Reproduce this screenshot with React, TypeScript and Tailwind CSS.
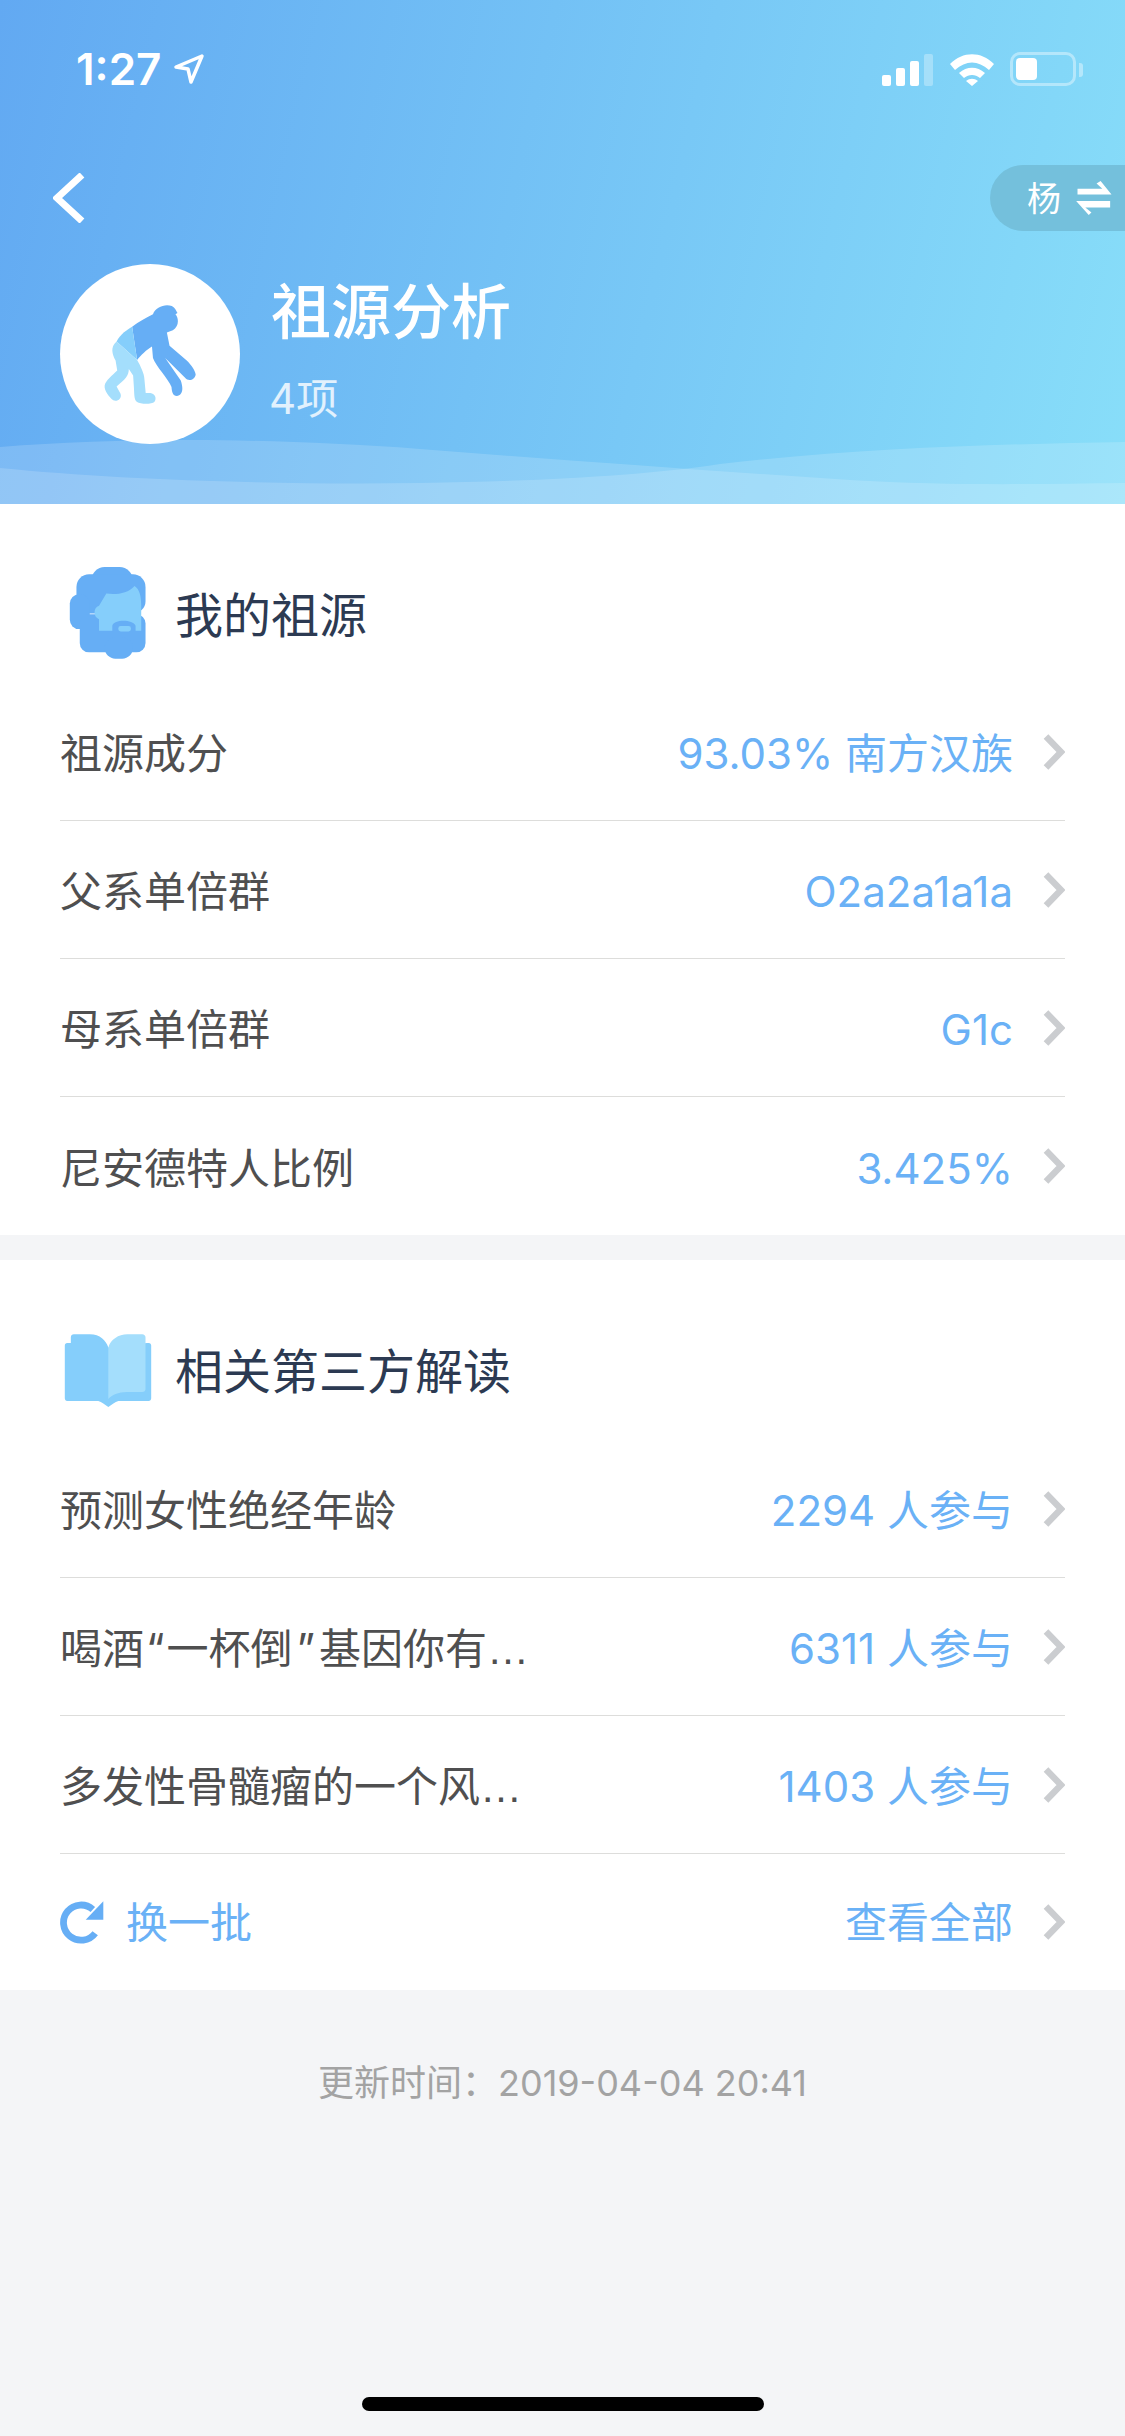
import type { ReactNode } from "react";

const CJK = "font-['Inter','Noto_Sans_CJK_SC',sans-serif]";

type RowProps = {
  label: ReactNode;
  value: string;
  last?: boolean;
};

function Chevron() {
  return (
    <svg width="22" height="36" viewBox="0 0 22 36" className="ml-[30px] shrink-0">
      <path d="M3 2.5 L18 18 L3 33.5" fill="none" stroke="#cbcdd0" strokeWidth="6.5" />
    </svg>
  );
}

function Ellipsis() {
  return <span className="font-['Liberation_Sans',sans-serif]">…</span>;
}

function Row({ label, value, last }: RowProps) {
  return (
    <div className={`mx-[60px] flex h-[138px] items-center justify-between ${last ? "" : "border-b border-[#dddddb]"}`}>
      <span className="pt-[4px] text-[42px] text-[#4f4f50]">{label}</span>
      <div className="flex items-center">
        <span className="pt-[4px] text-[42px] text-[#6ab1f6]">{value}</span>
        <Chevron />
      </div>
    </div>
  );
}

function MonkeyIcon() {
  return (
    <svg width="92" height="101" viewBox="190 160 278 303">
      <path fill="#66aef5" d="M275 228 C295 212 320 200 338 190 C345 168 375 157 395 165 C405 170 408 180 412 186 L406 190 C418 205 415 228 398 238 L380 245 L388 285 L440 330 C455 345 465 360 467 372 C465 388 445 395 435 382 L375 322 L422 390 C432 420 425 435 410 437 C398 437 395 425 394 410 C385 385 345 345 338 322 L335 287 C320 295 300 315 290 328 Z" />
      <path fill="#85cefb" d="M275 228 L290 328 L228 272 C240 250 258 238 275 228 Z" />
      <path fill="#a4defc" d="M228 272 L290 328 C300 345 312 370 312 385 L316 428 L330 428 C345 430 350 445 342 455 C335 462 300 462 290 455 C280 448 282 430 280 405 L278 375 L265 355 C265 375 255 385 228 408 L240 430 C245 445 230 455 218 450 C205 440 190 420 192 405 C195 390 215 375 230 360 L225 330 C215 310 208 290 228 272 Z" />
    </svg>
  );
}

function FaceIcon() {
  return (
    <svg width="78" height="93" viewBox="88 45 234 280" className="mb-[6px]">
      <g fill="#66aef5">
        <rect x="155" y="48" width="125" height="80" rx="40" />
        <rect x="110" y="70" width="208" height="118" rx="38" />
        <rect x="90" y="130" width="60" height="105" rx="28" />
        <rect x="120" y="190" width="198" height="115" rx="28" />
        <rect x="195" y="260" width="85" height="64" rx="32" />
      </g>
      <path fill="#85cefb" d="M200 128 C230 132 265 128 285 105 C300 115 305 135 305 165 L305 240 L178 240 L178 205 C160 200 160 170 178 165 Z" />
      <path fill="#66aef5" d="M218 242 L218 225 C222 205 280 205 288 225 L288 242 Z" />
      <rect x="236" y="226" width="38" height="16" rx="7" fill="#85cefb" />
    </svg>
  );
}

function BookIcon() {
  return (
    <svg width="88" height="73" viewBox="74 68 260 218" className="mb-[4px]">
      <path fill="#85cefb" d="M82 95 L93 95 L93 78 C93 72 97 69 102 69 L150 69 C180 69 198 88 205 108 L320 95 L326 95 C330 95 333 98 333 102 L333 260 C333 265 330 268 325 268 L235 268 C225 270 215 280 205 286 C195 280 185 270 175 268 L82 268 C78 268 75 265 75 260 L75 102 C75 98 78 95 82 95 Z" />
      <path fill="#a4defc" d="M205 108 C212 85 235 69 262 69 L306 69 C312 69 316 73 316 78 L316 232 C316 238 312 241 306 241 L260 241 C235 241 215 250 205 262 Z" />
    </svg>
  );
}

function RefreshIcon() {
  return (
    <svg width="44" height="44" viewBox="58 62 130 130">
      <path d="M155 90 A52 52 0 1 0 162 160" fill="none" stroke="#66aef5" strokeWidth="20" />
      <path d="M186 66 L186 120 L134 120 Z" fill="#66aef5" />
    </svg>
  );
}

function StatusBar() {
  return (
    <div className="flex h-[90px] items-start justify-between pl-[76px] pr-[42px] pt-[46px]">
      <div className="flex items-center">
        <span className="text-[44px] font-semibold leading-[46px] text-white">1:27</span>
        <svg width="32" height="32" viewBox="0 0 32 32" className="ml-[12px]">
          <path d="M29 3 L3 14 L15 16 L18 29 Z" fill="none" stroke="#fff" strokeWidth="3.5" strokeLinejoin="round" />
        </svg>
      </div>
      <div className="mt-[6px] flex items-end">
        <div className="flex items-end gap-[5px]">
          <div className="h-[11px] w-[9px] rounded-[2px] bg-white" />
          <div className="h-[18px] w-[9px] rounded-[2px] bg-white" />
          <div className="h-[25px] w-[9px] rounded-[2px] bg-white" />
          <div className="h-[32px] w-[9px] rounded-[2px] bg-white/30" />
        </div>
        <svg width="46" height="33" viewBox="0 0 46 33" className="ml-[16px]">
          <path d="M1 11 C14 -2 32 -2 45 11 L40 17 C29 7 17 7 6 17 Z M10 20 C18 13 28 13 36 20 L31 25 C26 21 20 21 15 25 Z M17 28 C21 25 25 25 29 28 L23 33 Z" fill="#fff" />
        </svg>
        <div className="ml-[15px] flex h-[34px] w-[66px] items-center rounded-[10px] border-[3px] border-white/40 p-[3px]">
          <div className="h-full w-[21px] rounded-[4px] bg-white" />
        </div>
        <div className="mb-[9px] ml-[3px] h-[14px] w-[4px] rounded-r-[3px] bg-white/40" />
      </div>
    </div>
  );
}

function Header() {
  return (
    <div className="relative h-[504px] shrink-0 overflow-hidden bg-[linear-gradient(103deg,#62a9f2_0%,#78c8f6_58%,#88def9_100%)]">
      <StatusBar />
      <div className="ml-[53px] mt-[83px] h-[50px] w-[32px]">
        <svg width="32" height="50" viewBox="0 0 32 50">
          <path d="M29 2 L4 25 L29 48" fill="none" stroke="#fff" strokeWidth="7" />
        </svg>
      </div>
      <div className="absolute right-0 top-[165px] flex h-[66px] w-[135px] items-center rounded-l-[33px] bg-[#74c0dc] pl-[37px]">
        <span className="text-[34px] text-white">杨</span>
        <svg width="36" height="34" viewBox="708 453 105 100" className="ml-[15px]">
          <path fill="#fff" d="M712 476 L785 476 L768 460 L780 453 L812 493 L712 493 Z M808 512 L708 512 L745 553 L753 546 L735 531 L808 531 Z" />
        </svg>
      </div>
      <div className="ml-[60px] mt-[41px] flex">
        <div className="z-10 flex h-[180px] w-[180px] items-center justify-center rounded-full bg-white">
          <MonkeyIcon />
        </div>
        <div className="z-10 ml-[31px] flex flex-col">
          <span className="mt-[10px] text-[60px] font-medium leading-[76px] text-white">祖源分析</span>
          <span className="-ml-[2px] mt-[24px] text-[42px] leading-[50px] text-white/80">4项</span>
        </div>
      </div>
      <svg width="1125" height="64" viewBox="0 440 1125 64" className="absolute bottom-0 left-0">
        <path fill="#fff" fillOpacity="0.16" d="M0 447 C120 438 260 437 420 449 C560 460 700 470 850 480 C950 486 1040 484 1125 483 L1125 504 L0 504 Z" />
        <path fill="#fff" fillOpacity="0.16" d="M0 468 C120 480 280 485 420 483 C540 481 640 476 720 464 C860 448 1000 444 1125 442 L1125 504 L0 504 Z" />
      </svg>
    </div>
  );
}

export default function App() {
  return (
    <div className={`flex min-h-[2436px] flex-col bg-[#f4f5f7] ${CJK}`}>
      <Header />

      <section className="bg-white">
        <div className="flex h-[179px] items-center pl-[69px] pt-[44px]">
          <FaceIcon />
          <span className="ml-[28px] text-[48px] text-[#2c3a52]">我的祖源</span>
        </div>
        <Row label="祖源成分" value="93.03% 南方汉族" />
        <Row label="父系单倍群" value="O2a2a1a1a" />
        <Row label="母系单倍群" value="G1c" />
        <Row label="尼安德特人比例" value="3.425%" last />
      </section>

      <section className="mt-[25px] bg-white">
        <div className="flex h-[180px] items-center pl-[64px] pt-[44px]">
          <BookIcon />
          <span className="ml-[23px] text-[48px] text-[#2c3a52]">相关第三方解读</span>
        </div>
        <Row label="预测女性绝经年龄" value="2294 人参与" />
        <Row
          label={
            <>
              喝酒<span className="mx-[2px]">“</span>一杯倒<span className="mx-[4px]">”</span>基因你有
              <Ellipsis />
            </>
          }
          value="6311 人参与"
        />
        <Row
          label={
            <>
              多发性骨髓瘤的一个风
              <Ellipsis />
            </>
          }
          value="1403 人参与"
        />
        <div className="mx-[60px] flex h-[136px] items-center justify-between">
          <div className="flex items-center">
            <RefreshIcon />
            <span className="ml-[22px] text-[42px] text-[#6ab1f6]">换一批</span>
          </div>
          <div className="flex items-center">
            <span className="text-[42px] text-[#6ab1f6]">查看全部</span>
            <Chevron />
          </div>
        </div>
      </section>

      <p className="mt-[70px] text-center text-[36px] leading-[46px] text-[#a3a3a3]">更新时间：2019-04-04 20:41</p>

      <div className="mb-[25px] mt-auto flex justify-center">
        <div className="h-[14px] w-[402px] rounded-full bg-black" />
      </div>
    </div>
  );
}
